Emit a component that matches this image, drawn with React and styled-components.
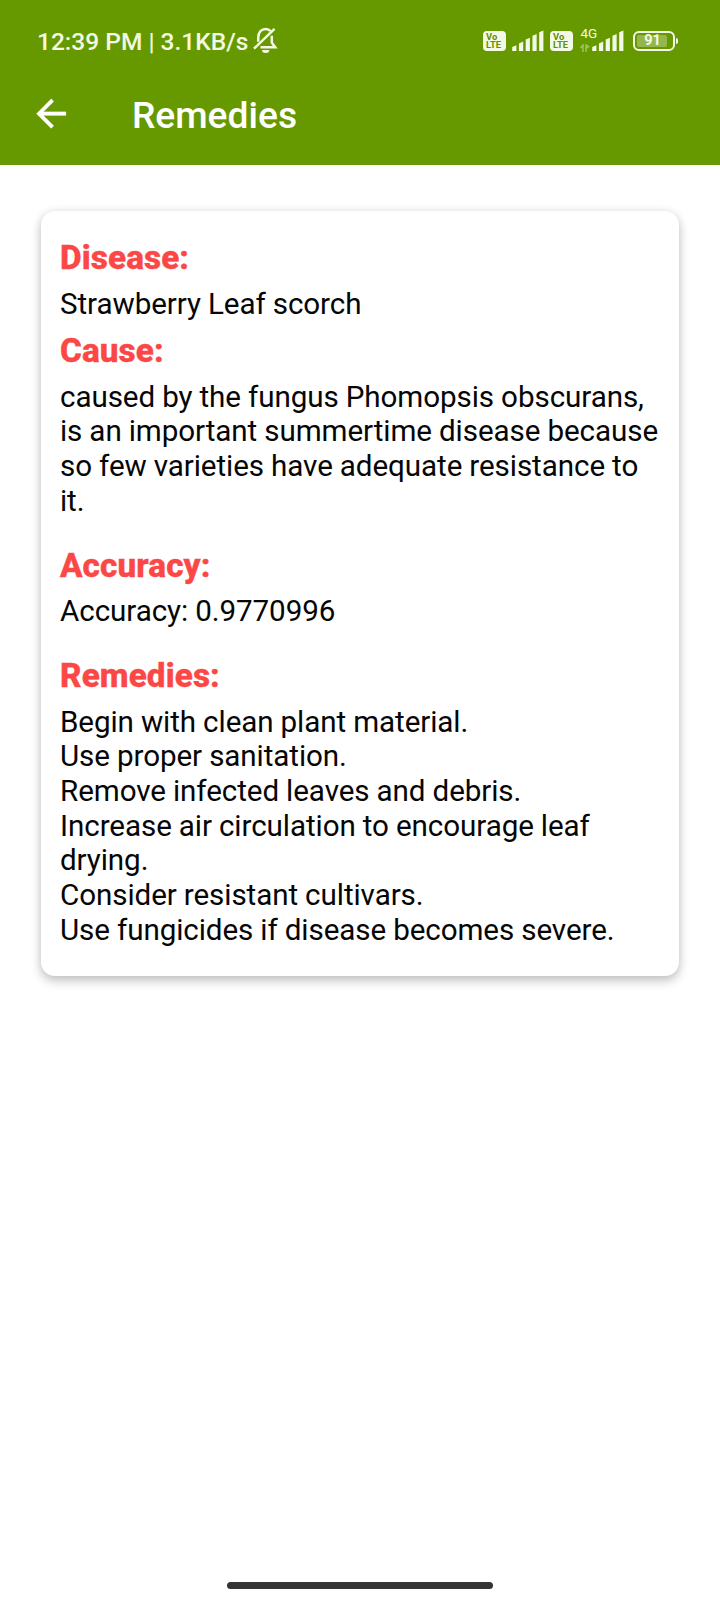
import React from "react";
import styled, { createGlobalStyle } from "styled-components";

const GlobalStyle = createGlobalStyle`
  * { box-sizing: border-box; }
  body { margin: 0; background: #fff; font-family: Roboto, sans-serif; }
`;

const Screen = styled.div`
  width: 720px;
  height: 1600px;
  display: flex;
  flex-direction: column;
  overflow: hidden;
  background: #fff;
`;

const Header = styled.header`
  height: 164.5px;
  background: #669900;
  color: #fff;
`;

const StatusBar = styled.div`
  height: 81px;
  padding: 0 42px 0 37px;
  display: flex;
  align-items: center;
  justify-content: space-between;
  color: #f3f9e4;
`;

const StatusGroup = styled.div`
  display: flex;
  align-items: center;
`;

const Clock = styled.span`
  margin-top: 2px;
  font-size: 24.5px;
  line-height: 30px;
  font-weight: 500;
  white-space: pre;
`;

const Icon = styled.svg`
  display: block;
  flex: none;
  margin-left: ${(p) => p.$gap || 0}px;
`;

const VolteBadge = styled.span`
  width: 23px;
  height: 20px;
  margin-left: ${(p) => p.$gap || 0}px;
  padding: 2px 0 0 3.5px;
  border-radius: 4px;
  background: #f3f9e4;
  color: #5f9100;
  display: flex;
  flex-direction: column;
  font-size: 9.4px;
  line-height: 8.3px;
  font-weight: 700;
`;

const NetworkColumn = styled.span`
  width: 12px;
  height: 25px;
  margin: -3px 0 0 7px;
  display: flex;
  flex-direction: column;
  justify-content: space-between;
`;

const NetworkType = styled.span`
  margin-left: 1px;
  font-size: 13.5px;
  line-height: 12px;
  white-space: nowrap;
`;

const Battery = styled.span`
  width: 42px;
  height: 20px;
  margin-left: 9px;
  padding: 2px;
  border: 2px solid #f3f9e4;
  border-radius: 6px;
  display: flex;
`;

const BatteryLevel = styled.span`
  width: 91%;
  border-radius: 2px;
  background: rgba(255, 255, 255, 0.3);
  display: flex;
  align-items: center;
  justify-content: center;
  font-size: 14.5px;
  line-height: 12px;
  font-weight: 700;
  padding: 1px 0 0 1px;
`;

const BatteryTip = styled.span`
  width: 2.5px;
  height: 6px;
  margin-left: 1px;
  border-radius: 0 2px 2px 0;
  background: #f3f9e4;
`;

const Toolbar = styled.div`
  height: 66px;
  padding-left: 29px;
  display: flex;
  align-items: center;
`;

const Title = styled.h1`
  margin: 1.5px 0 0 58.5px;
  font-size: 37.2px;
  line-height: 42px;
  font-weight: 500;
`;

const Content = styled.main`
  flex: 1;
  padding: 46px 41px 0;
`;

const Card = styled.section`
  height: 765.5px;
  padding: 27.75px 19px;
  border-radius: 14px;
  background: #fff;
  box-shadow: 0 5px 11px rgba(0, 0, 0, 0.22), 0 0 9px rgba(0, 0, 0, 0.08);
`;

const Heading = styled.h2`
  margin: ${(p) => p.$before || 0}px 0 9.25px;
  font-size: 33.3px;
  line-height: 39px;
  font-weight: 800;
  letter-spacing: 0.1px;
  -webkit-text-stroke: 0.4px #fb4846;
  color: #fb4846;
`;

const Line = styled.p`
  margin: 0;
  font-size: 29.6px;
  line-height: 34.67px;
  letter-spacing: -0.08px;
  word-spacing: -0.2px;
  color: #060606;
  white-space: nowrap;
`;

const NavArea = styled.footer`
  height: 26px;
  display: flex;
  justify-content: center;
`;

const HomeIndicator = styled.div`
  margin-top: 8px;
  width: 266px;
  height: 7px;
  border-radius: 4px;
  background: #353535;
`;

const MutedBell = () => (
  <Icon $gap={3.5} width="26" height="28" viewBox="0 0.8 26 28" fill="none" stroke="currentColor" strokeWidth="2.5">
    <path d="M6.2 15.5V11.5C6.2 6 9.5 2.7 13.5 2.7C16 2.7 17.6 3.6 18.6 4.8" />
    <path d="M2 22.5L22.5 2.6" />
    <path d="M19.8 9.5V16.5L23.2 21H8.5" />
    <path d="M10 23.8h7.4a3.7 3 0 0 1-7.4 0z" fill="currentColor" stroke="none" />
  </Icon>
);

const Volte = ({ gap }) => (
  <VolteBadge $gap={gap}>
    <span>Vo</span>
    <span>LTE</span>
  </VolteBadge>
);

const barTops = [15.5, 11.8, 8, 4.2, 0.6];

const Signal = ({ gap }) => (
  <Icon $gap={gap} width="32" height="21" viewBox="0 0 32 21" fill="currentColor">
    {barTops.map((top, i) => (
      <path key={top} d={`M${i * 6.75 + 0.2} ${top + 1.6}l4.2-1.8V21h-4.2z`} />
    ))}
  </Icon>
);

const DataArrows = () => (
  <Icon width="10" height="8" viewBox="0 0 10 8" fill="none" stroke="currentColor" strokeWidth="1.4" opacity="0.45">
    <path d="M3 8V1L0.6 4M6 8V1L8.6 2.6L6 4.4" />
  </Icon>
);

const BackArrow = () => (
  <Icon
    width="44.4"
    height="44.4"
    viewBox="0 0.3 24 24"
    fill="currentColor"
    stroke="currentColor"
    strokeWidth="0.1"
    strokeLinejoin="round"
  >
    <path d="M20 11H7.83l5.59-5.59L12 4l-8 8 8 8 1.41-1.41L7.83 13H20v-2z" />
  </Icon>
);

const sections = [
  { title: "Disease:", lines: ["Strawberry Leaf scorch"] },
  {
    title: "Cause:",
    before: 10.25,
    lines: [
      "caused by the fungus Phomopsis obscurans,",
      "is an important summertime disease because",
      "so few varieties have adequate resistance to",
      "it.",
    ],
  },
  { title: "Accuracy:", before: 27.75, lines: ["Accuracy: 0.9770996"] },
  {
    title: "Remedies:",
    before: 27.25,
    lines: [
      "Begin with clean plant material.",
      "Use proper sanitation.",
      "Remove infected leaves and debris.",
      "Increase air circulation to encourage leaf",
      "drying.",
      "Consider resistant cultivars.",
      "Use fungicides if disease becomes severe.",
    ],
  },
];

export default function App() {
  return (
    <Screen>
      <GlobalStyle />
      <Header>
        <StatusBar>
          <StatusGroup>
            <Clock>12:39 PM | 3.1KB/s</Clock>
            <MutedBell />
          </StatusGroup>
          <StatusGroup>
            <Volte />
            <Signal gap={6} />
            <Volte gap={6} />
            <NetworkColumn>
              <NetworkType>4G</NetworkType>
              <DataArrows />
            </NetworkColumn>
            <Signal gap={0} />
            <Battery>
              <BatteryLevel>91</BatteryLevel>
            </Battery>
            <BatteryTip />
          </StatusGroup>
        </StatusBar>
        <Toolbar>
          <BackArrow />
          <Title>Remedies</Title>
        </Toolbar>
      </Header>
      <Content>
        <Card>
          {sections.map((s) => (
            <React.Fragment key={s.title}>
              <Heading $before={s.before}>{s.title}</Heading>
              {s.lines.map((l) => (
                <Line key={l}>{l}</Line>
              ))}
            </React.Fragment>
          ))}
        </Card>
      </Content>
      <NavArea>
        <HomeIndicator />
      </NavArea>
    </Screen>
  );
}
